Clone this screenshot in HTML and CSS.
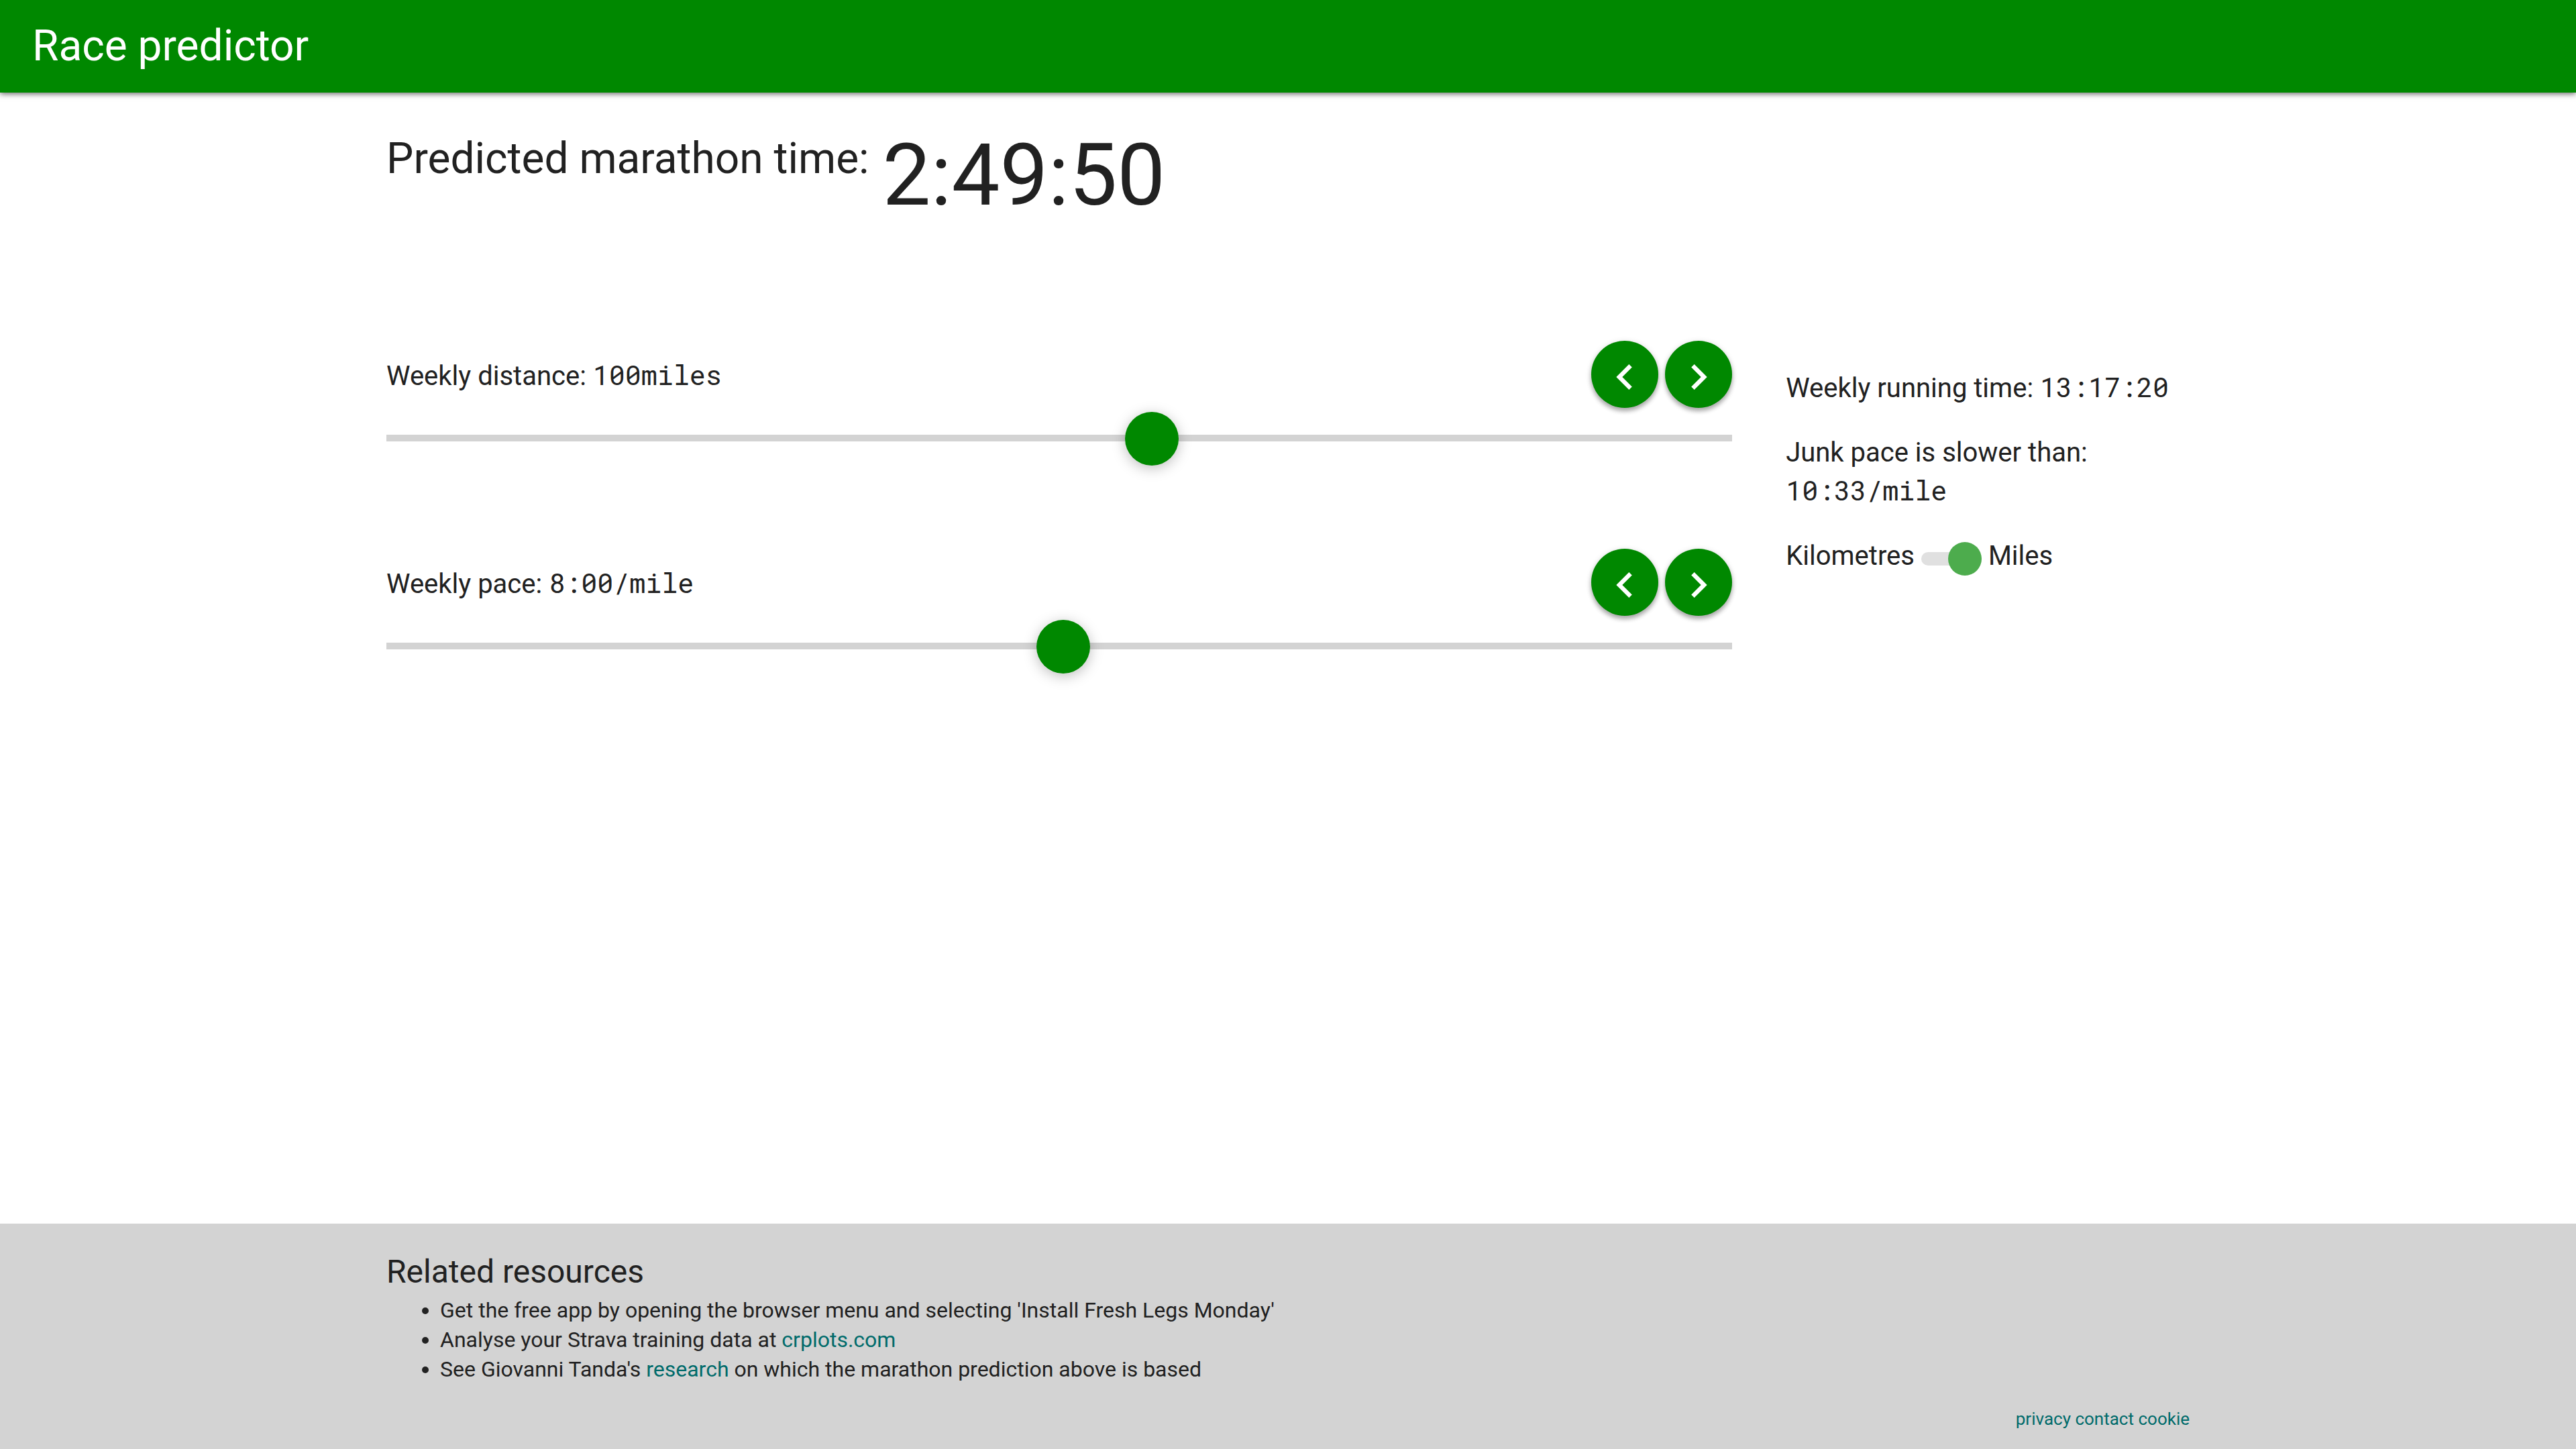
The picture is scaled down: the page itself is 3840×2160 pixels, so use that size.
FILE: index.html
```html
<!DOCTYPE html>
<html lang="en">
<head>
<meta charset="utf-8">
<meta name="viewport" content="width=device-width, initial-scale=1">
<title>Race predictor</title>
<link rel="stylesheet" href="styles.css">
</head>
<body>
<header class="app-bar">
  <h1 class="app-title">Race predictor</h1>
</header>
<main class="content">
  <h2 class="prediction">
    <span>Predicted marathon time:</span>
    <output class="clock">2:49:50</output>
  </h2>
  <div class="columns">
    <div class="controls">
      <section class="control">
        <div class="control-head">
          <label class="control-label" for="distance">Weekly distance: <span class="value">100miles</span></label>
          <div class="steppers">
            <button class="step" type="button" aria-label="Decrease distance"><svg class="icon" viewBox="0 0 24 24" aria-hidden="true"><path d="M15.41 7.41L14 6l-6 6 6 6 1.41-1.41L10.83 12z"/></svg></button>
            <button class="step" type="button" aria-label="Increase distance"><svg class="icon" viewBox="0 0 24 24" aria-hidden="true"><path d="M10 6L8.59 7.41 13.17 12l-4.58 4.59L10 18l6-6z"/></svg></button>
          </div>
        </div>
        <input class="slider" id="distance" type="range" min="0" max="175" value="100">
      </section>
      <section class="control">
        <div class="control-head">
          <label class="control-label" for="pace">Weekly pace: <span class="value">8:00/mile</span></label>
          <div class="steppers">
            <button class="step" type="button" aria-label="Decrease pace"><svg class="icon" viewBox="0 0 24 24" aria-hidden="true"><path d="M15.41 7.41L14 6l-6 6 6 6 1.41-1.41L10.83 12z"/></svg></button>
            <button class="step" type="button" aria-label="Increase pace"><svg class="icon" viewBox="0 0 24 24" aria-hidden="true"><path d="M10 6L8.59 7.41 13.17 12l-4.58 4.59L10 18l6-6z"/></svg></button>
          </div>
        </div>
        <input class="slider" id="pace" type="range" min="0" max="1000" value="503">
      </section>
    </div>
    <aside class="summary">
      <p class="fact">Weekly running time: <span class="value">13:17:20</span></p>
      <p class="fact">Junk pace is slower than: <span class="value">10:33/mile</span></p>
      <div class="units">
        <label for="units">Kilometres</label>
        <input class="switch" id="units" type="checkbox" checked>
        <label for="units">Miles</label>
      </div>
    </aside>
  </div>
</main>
<footer class="footer">
  <h3 class="footer-title">Related resources</h3>
  <ul class="resources">
    <li>Get the free app by opening the browser menu and selecting 'Install Fresh Legs Monday'</li>
    <li>Analyse your Strava training data at <a href="#crplots">crplots.com</a></li>
    <li>See Giovanni Tanda's <a href="#research">research</a> on which the marathon prediction above is based</li>
  </ul>
  <nav class="legal"><a href="#privacy">privacy</a> <a href="#contact">contact</a> <a href="#cookie">cookie</a></nav>
</footer>
</body>
</html>
```

FILE: styles.css
```css
:root {
  --green: #008800;
  --grey: #d3d3d3;
  --link: #006b6b;
  --page-edge: 15%;
}

* {
  box-sizing: border-box;
}

body {
  display: flex;
  flex-direction: column;
  min-height: 100vh;
  margin: 0;
  background: #fff;
  color: #212121;
  font-family: Roboto, "Liberation Sans", sans-serif;
  font-size: 40px;
  line-height: 58px;
}

h1, h2, h3, p, ul {
  margin: 0;
  font-weight: 400;
}

a {
  color: var(--link);
  text-decoration: none;
}

.app-bar {
  padding: 31px 48px;
  background: var(--green);
  color: #fff;
  box-shadow: 0 2px 8px rgba(0, 0, 0, 0.6);
}

.app-title {
  font-size: 64px;
  line-height: 76px;
}

.content {
  flex: 1;
  padding: 61px var(--page-edge);
}

.prediction {
  display: flex;
  align-items: flex-start;
  gap: 20px;
  font-size: 64px;
  line-height: 76px;
}

.clock {
  font-size: 128px;
  line-height: 124px;
}

.columns {
  display: grid;
  grid-template-columns: 10fr 3fr;
  gap: 80px;
  margin-top: 185px;
}

.controls {
  display: flex;
  flex-direction: column;
  gap: 125px;
}

.control {
  display: flex;
  flex-direction: column;
  gap: 5px;
}

.control-head {
  display: flex;
  align-items: center;
  justify-content: space-between;
}

.control-label {
  padding-top: 6px;
}

.value {
  font-family: "Roboto Mono", "Liberation Mono", monospace;
  line-height: 40px;
}

.steppers {
  display: flex;
  gap: 10px;
}

.step {
  display: flex;
  align-items: center;
  justify-content: center;
  width: 100px;
  height: 100px;
  padding: 8px 0 0;
  border: 0;
  border-radius: 50%;
  background: var(--green);
  color: #fff;
  box-shadow: 0 2px 10px rgba(0, 0, 0, 0.16), 0 5px 6px rgba(0, 0, 0, 0.26);
}

.icon {
  width: 76px;
  height: 76px;
  fill: currentColor;
}

.slider {
  appearance: none;
  width: 100%;
  height: 80px;
  margin: 0;
  background: transparent;
}

.slider::-webkit-slider-runnable-track {
  height: 10px;
  background: var(--grey);
}

.slider::-webkit-slider-thumb {
  appearance: none;
  width: 80px;
  height: 80px;
  margin-top: -34px;
  border-radius: 50%;
  background: var(--green);
  box-shadow: 0 4px 20px rgba(0, 0, 0, 0.26);
}

.summary {
  display: flex;
  flex-direction: column;
  gap: 38px;
  padding-top: 42px;
}

.units {
  display: flex;
  align-items: flex-end;
  gap: 10px;
}

.switch {
  appearance: none;
  display: grid;
  align-items: center;
  width: 90px;
  height: 50px;
  margin: 0;
}

.switch::before,
.switch::after {
  content: "";
  grid-area: 1 / 1;
}

.switch::before {
  height: 20px;
  border-radius: 10px;
  background: #e0e0e0;
}

.switch::after {
  width: 50px;
  height: 50px;
  border-radius: 50%;
  background: #9e9e9e;
}

.switch:checked::after {
  justify-self: end;
  background: #4dac4d;
}

.footer {
  padding: 44px var(--page-edge) 29px;
  background: var(--grey);
}

.footer-title {
  font-size: 48px;
  line-height: 56px;
}

.resources {
  margin-top: 7px;
  padding-left: 80px;
  font-size: 32px;
  line-height: 44px;
}

.legal {
  margin-top: 36px;
  font-size: 26px;
  line-height: 32px;
  text-align: right;
}
```
